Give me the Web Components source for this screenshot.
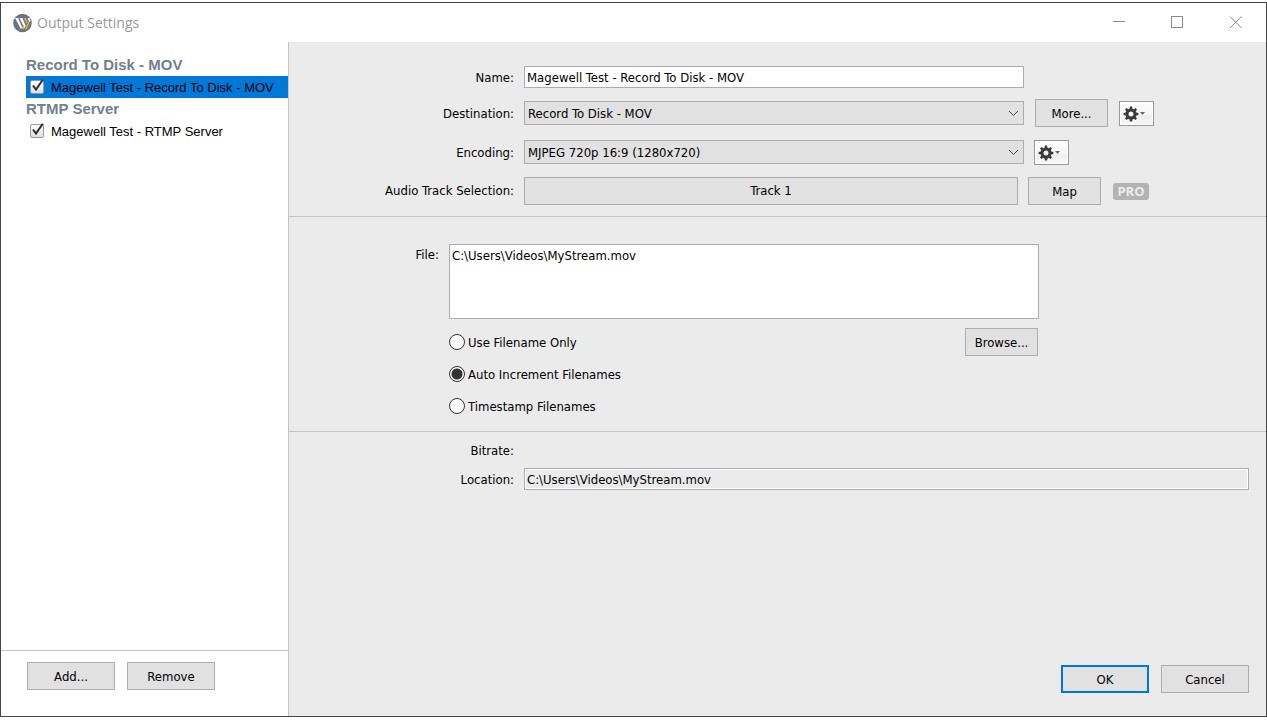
<!DOCTYPE html>
<html lang="en">
<head>
<meta charset="utf-8">
<title>Output Settings</title>
<style>
  html, body { height: 100%; margin: 0; }
  body {
    background: #fff; color: #000; box-sizing: border-box; padding: 2px 0 3px;
    font: 13px/16px "DejaVu Sans Condensed", Tahoma, sans-serif;
  }
</style>
</head>
<body>
<settings-window heading="Output Settings">
  <output-list slot="side">
    <output-group heading="Record To Disk - MOV">
      <output-item selected>Magewell Test - Record To Disk - MOV</output-item>
    </output-group>
    <output-group heading="RTMP Server">
      <output-item>Magewell Test - RTMP Server</output-item>
    </output-group>
    <push-button slot="actions">Add...</push-button>
    <push-button slot="actions">Remove</push-button>
  </output-list>

  <settings-section class="output">
    <text-field label="Name:" value="Magewell Test - Record To Disk - MOV"></text-field>
    <select-field label="Destination:" value="Record To Disk - MOV">
      <push-button size="small">More...</push-button>
      <gear-button label="Destination options"></gear-button>
    </select-field>
    <select-field label="Encoding:" value="MJPEG 720p 16:9 (1280x720)">
      <gear-button label="Encoding options"></gear-button>
    </select-field>
    <track-field label="Audio Track Selection:" value="Track 1">
      <push-button size="small">Map</push-button>
      <pro-badge>PRO</pro-badge>
    </track-field>
  </settings-section>

  <settings-section class="file">
    <file-field label="File:" value="C:\Users\Videos\MyStream.mov"></file-field>
    <naming-options>
      <push-button size="small">Browse...</push-button>
    </naming-options>
  </settings-section>

  <settings-section class="status">
    <status-row label="Bitrate:"></status-row>
    <text-field label="Location:" value="C:\Users\Videos\MyStream.mov" readonly></text-field>
  </settings-section>

  <push-button slot="footer" primary>OK</push-button>
  <push-button slot="footer">Cancel</push-button>
</settings-window>

<script>
const define = (name, render, setup) => {
  customElements.define(name, class extends HTMLElement {
    constructor() {
      super();
      this.attachShadow({ mode: "open" });
    }
    connectedCallback() {
      if (this.shadowRoot.firstChild) return;
      const t = document.createElement("template");
      t.innerHTML = render(this);
      this.shadowRoot.append(t.content.cloneNode(true));
      if (setup) setup(this);
    }
  });
};

const attr = (el, name) => el.getAttribute(name) || "";

const rowStyle = `
  :host { display: flex; align-items: center; gap: 10px; min-width: 0; }
  * { box-sizing: border-box; }
  .label { flex: none; width: var(--label-width, 225px); padding-top: 2px; text-align: right; }
  .control { flex: 1 1 0; min-width: 0; max-width: 500px; }
`;

define("settings-window", el => `
  <style>
    :host {
      display: grid; grid-template: 39px minmax(0, 1fr) / 288px minmax(0, 1fr);
      box-sizing: border-box; height: 100%; border: 1px solid #444; background: #fff;
    }
    header { grid-column: 1 / -1; display: flex; align-items: center; padding: 0 24px 0 11px; }
    h1 { flex: 1; margin: 0 0 0 5px; font: 14px/20px "Open Sans", "Noto Sans", sans-serif; color: #999; }
    nav { display: flex; gap: 45px; }
    nav button { display: block; width: 13px; height: 13px; padding: 0; border: 0; background: none; }
    svg { display: block; }
    aside { display: flex; min-height: 0; border-right: 1px solid #c4c4c4; }
    ::slotted([slot=side]) { flex: 1; }
    main { display: flex; flex-direction: column; background: #ebebeb; min-height: 0; }
    footer { margin-top: auto; display: flex; justify-content: flex-end; gap: 12px; padding: 0 17px 23px; }
  </style>
  <header>
    <svg width="20" height="20" viewBox="0 0 20 20" aria-hidden="true">
      <circle cx="10.5" cy="10" r="9.3" fill="#67758b"/>
      <path d="M3 5H6.2L10 14.2 9 16.2Z" fill="#fff"/>
      <path d="M7.6 5H10.4L13.6 12.8 12.6 15.6Z" fill="#fff"/>
      <path d="M9.6 15.6 11.4 11.8 12.6 14.6 11 16.4Z" fill="#f5b31c"/>
      <path d="M12 5H13.8L15.2 8.6 14.4 10.8Z" fill="#f5b31c"/>
      <path d="M13 16.4 16.4 8 17.2 10 14.4 16.4Z" fill="#f5b31c"/>
      <path d="M15.6 5H17.4L18.4 7.2 17.4 9.6Z" fill="#fff"/>
    </svg>
    <h1>${attr(el, "heading")}</h1>
    <nav>
      <button aria-label="Minimize"><svg width="13" height="13"><path d="M0 5.5H12" stroke="#8b8b8b"/></svg></button>
      <button aria-label="Maximize"><svg width="13" height="13"><rect x=".5" y=".5" width="11" height="11" fill="none" stroke="#8b8b8b"/></svg></button>
      <button aria-label="Close"><svg width="13" height="13"><path d="M1 .5 12.5 12M12.5 .5 1 12" stroke="#8b8b8b"/></svg></button>
    </nav>
  </header>
  <aside><slot name="side"></slot></aside>
  <main><slot></slot><footer><slot name="footer"></slot></footer></main>
`);

define("output-list", () => `
  <style>
    :host { display: flex; flex-direction: column; min-width: 0; }
    .groups { flex: 1; padding: 12px 0 0 25px; }
    .actions { display: flex; gap: 12px; padding: 11px 26px 26px; border-top: 1px solid #c4c4c4; }
  </style>
  <div class="groups"><slot></slot></div>
  <div class="actions"><slot name="actions"></slot></div>
`);

define("output-group", el => `
  <style>
    :host { display: block; font-family: "Liberation Sans", Arial, sans-serif; }
    h2 { margin: 0; font-size: 15px; line-height: 22px; font-weight: bold; color: #708090; }
  </style>
  <h2>${attr(el, "heading")}</h2>
  <slot></slot>
`);

define("output-item", () => `
  <style>
    :host { display: block; line-height: 22px; white-space: nowrap; }
    :host([selected]) { background: #0078d7; }
    label { display: flex; align-items: center; gap: 6px; padding-left: 4px; }
    .box { position: relative; width: 15px; height: 22px; }
    .text { padding-top: 1px; line-height: 21px; }
    input {
      appearance: none; display: block; box-sizing: border-box; width: 14px; height: 14px; margin: 4px 0 0;
      border: 1px solid #999; border-radius: 2px; background: linear-gradient(#fff, #dedede);
    }
    svg { position: absolute; left: 0; top: 2px; display: none; pointer-events: none; }
    input:checked + svg { display: block; }
  </style>
  <label><span class="box"><input type="checkbox" checked><svg width="15" height="16"><path d="M3 7.5 6 11.5 12.8 1.8" fill="none" stroke="#2d2d2d" stroke-width="2"/></svg></span><span class="text"><slot></slot></span></label>
`);

define("push-button", () => `
  <style>
    :host { display: block; flex: none; width: 88px; }
    :host([size=small]) { width: 73px; }
    button {
      display: block; box-sizing: border-box; width: 100%; height: 28px; padding: 2px 0 0;
      border: 1px solid #adadad; background: #e1e1e1; color: inherit; font: inherit;
    }
    :host([primary]) button { border: 2px solid #0078d7; }
  </style>
  <button><slot></slot></button>
`);

define("gear-button", el => `
  <style>
    :host { display: block; flex: none; }
    button {
      display: flex; align-items: center; gap: 1px; box-sizing: border-box; width: 35px; height: 25px; padding: 1px 3px 0;
      border: 1px solid #999; background: linear-gradient(#fdfdfd, #f6f6f6 55%, #eee 60%, #f8f8f8);
      box-shadow: inset 0 0 0 1px #fff;
    }
    svg { display: block; flex: none; }
  </style>
  <button aria-label="${attr(el, "label")}">
    <svg width="16" height="16" viewBox="-8 -8 16 16">
      <circle r="4" fill="none" stroke="#3a3a3a" stroke-width="3"/>
      <g fill="#3a3a3a">${[0, 45, 90, 135].map(a =>
        `<path transform="rotate(${a})" d="M-1.5-5-1.1-7.4H1.1L1.5-5ZM-1.5 5-1.1 7.4H1.1L1.5 5Z"/>`).join("")}</g>
    </svg>
    <svg width="5" height="4"><path d="M0 0H5L2.5 3Z" fill="#666"/></svg>
  </button>
`);

define("pro-badge", () => `
  <style>
    :host {
      flex: none; width: 36px; border-radius: 3px; background: #b3b3b3; color: #ececec; text-align: center;
      font: bold 13px/17px "Open Sans", "Noto Sans", sans-serif; margin-left: 2px;
    }
  </style>
  <slot></slot>
`);

define("settings-section", () => `
  <style>
    :host { display: flex; flex-direction: column; border-bottom: 1px solid #c4c4c4; }
    :host(.output) { gap: 11px; padding: 24px 17px 11px 0; }
    :host(.file) { --label-width: 150px; gap: 9px; padding: 27px 17px 11px 0; }
    :host(.status) { gap: 9px; padding: 9px 17px 0 0; border: 0; }
  </style>
  <slot></slot>
`);

define("text-field", el => `
  <style>
    ${rowStyle}
    input { height: 22px; padding: 0 2px; border: 1px solid #abadb3; background: #fff; color: inherit; font: inherit; }
    :host([readonly]) .control { max-width: none; background: #ebebeb; box-shadow: inset 0 0 0 1px #fff; }
  </style>
  <label class="label" for="f">${attr(el, "label")}</label>
  <input class="control" id="f" type="text"${el.hasAttribute("readonly") ? " readonly" : ""}>
`, el => { el.shadowRoot.getElementById("f").value = attr(el, "value"); });

define("select-field", el => `
  <style>
    ${rowStyle}
    :host { min-height: 28px; }
    .control { position: relative; }
    select {
      appearance: none; display: block; width: 100%; height: 24px; padding: 2px 24px 0 3px;
      border: 1px solid #adadad; border-radius: 0; background: #e1e1e1; color: inherit; font: inherit;
    }
    svg { position: absolute; right: 5px; top: 9px; pointer-events: none; }
    ::slotted(push-button) { margin: 0 1px; }
  </style>
  <label class="label" for="f">${attr(el, "label")}</label>
  <div class="control">
    <select id="f"><option>${attr(el, "value")}</option></select>
    <svg width="11" height="7"><path d="M1 1 5.5 5.5 10 1" fill="none" stroke="#444"/></svg>
  </div>
  <slot></slot>
`);

define("track-field", el => `
  <style>
    ${rowStyle}
    .control {
      max-width: 494px; height: 28px; padding: 0; border: 1px solid #adadad;
      background: #e1e1e1; color: inherit; font: inherit;
    }
    .label { padding-top: 0; }
  </style>
  <label class="label" for="f">${attr(el, "label")}</label>
  <button class="control" id="f">${attr(el, "value")}</button>
  <slot></slot>
`);

define("file-field", el => `
  <style>
    ${rowStyle}
    :host { align-items: flex-start; }
    .label { padding-top: 3px; }
    textarea {
      display: block; height: 75px; margin: 0; padding: 3px 2px; resize: none; outline: 0;
      border: 1px solid #abadb3; background: #fff; color: inherit; font: inherit;
    }
    .control { max-width: 590px; }
  </style>
  <label class="label" for="f">${attr(el, "label")}</label>
  <textarea class="control" id="f"></textarea>
`, el => { el.shadowRoot.getElementById("f").value = attr(el, "value"); });

define("naming-options", () => `
  <style>
    :host { display: flex; align-items: flex-start; max-width: 589px; padding-left: 160px; }
    .options { flex: 1; display: grid; gap: 4px; justify-items: start; }
    label { display: flex; align-items: center; gap: 3px; height: 28px; }
    span { padding-top: 2px; }
    input {
      appearance: none; box-sizing: border-box; width: 16px; height: 16px; margin: 0;
      border: 1px solid #333; border-radius: 50%; background: #fff;
    }
    input:checked { background: radial-gradient(circle, #333 0 5px, #fff 6px); }
  </style>
  <div class="options" role="radiogroup" aria-label="File naming">
    <label><input type="radio" name="naming"><span>Use Filename Only</span></label>
    <label><input type="radio" name="naming" checked><span>Auto Increment Filenames</span></label>
    <label><input type="radio" name="naming"><span>Timestamp Filenames</span></label>
  </div>
  <slot></slot>
`);

define("status-row", el => `
  <style>${rowStyle}</style>
  <span class="label">${attr(el, "label")}</span>
`);
</script>
</body>
</html>
